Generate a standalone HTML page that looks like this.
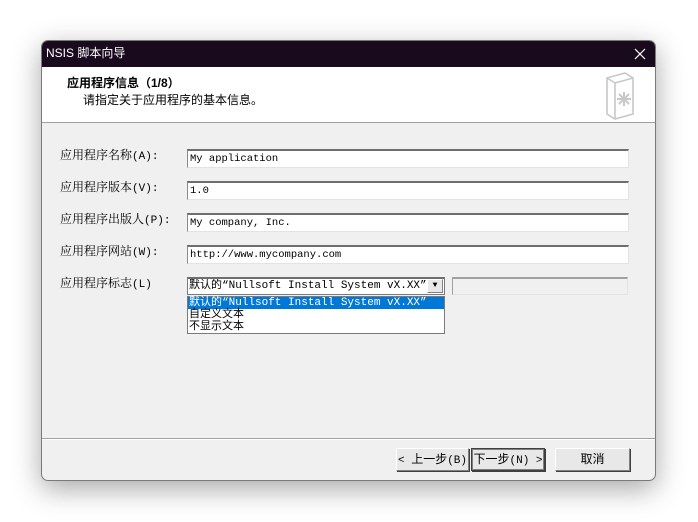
<!DOCTYPE html>
<html><head><meta charset="utf-8"><style>
*{box-sizing:border-box;margin:0;padding:0}
body{width:698px;height:522px;background:#fff;position:relative;overflow:hidden;font-family:"Liberation Sans","Noto Sans CJK SC",sans-serif;font-size:12px;color:#000}
.win{position:absolute;left:41px;top:40px;width:615px;height:441px;background:#f0f0f0;border:1px solid #7a7a7a;border-radius:7px;overflow:hidden;box-shadow:0 8px 28px rgba(0,0,0,.35)}
.title{position:absolute;left:0;top:0;width:100%;height:26px;background:#1a0a1e;color:#fff;font-size:12px;line-height:24px;padding-left:4px}
.head{position:absolute;left:0;top:26px;width:100%;height:56px;background:#fff;border-bottom:1px solid #a0a0a0}
.t1{position:absolute;left:25px;top:7px;font-weight:bold;font-size:12px}
.t2{position:absolute;left:41px;top:24px;font-size:12px}
.lbl{position:absolute;left:18px;font-size:12px;font-family:"Liberation Serif","Noto Serif CJK SC",serif}
.lbl span{font-family:"Liberation Mono",monospace;font-size:11px}
.ed{position:absolute;left:145px;width:442px;height:19px;background:#fff;border-top:2px solid #6e6e6e;border-left:1px solid #8a8a8a;border-right:1px solid #e3e3e3;border-bottom:1px solid #e3e3e3;font-family:"Liberation Mono","Noto Sans CJK SC",monospace;font-size:10.5px;line-height:16px;padding-left:2px}
.btn{position:absolute;top:407px;height:23px;background:#e8e8e8;border:1px solid #808080;border-top-color:#fff;border-left-color:#fff;box-shadow:1px 1px 0 #404040;font-size:12px;line-height:20px;text-align:center}
.ls{font-family:"Liberation Mono","Noto Sans CJK SC",monospace;font-size:11px}
</style></head><body>
<div class="win">
 <div class="title">NSIS 脚本向导
  <svg style="position:absolute;right:9px;top:7px" width="12" height="12" viewBox="0 0 12 12" stroke="#fff" stroke-width="1.2"><path d="M1 1 L11 11 M11 1 L1 11"/></svg></div>
 <div class="head">
  <div class="t1">应用程序信息（1/8）</div>
  <div class="t2">请指定关于应用程序的基本信息。</div>
  <svg style="position:absolute;left:561px;top:3px" width="36" height="50" viewBox="0 0 36 50" fill="none" stroke="#c8c8c8" stroke-width="1.6">
   <path d="M4 8 L22 3 L30 8 L30 44 L12 49 L4 44 Z"/><path d="M12 13 L30 8 M12 13 L12 49 M4 8 L12 13"/>
   <path d="M21 22 v14 M14 29 h14 M16 24 l10 10 M26 24 l-10 10" stroke-width="2"/>
  </svg>
 </div>
 <div class="lbl" style="top:105px">应用程序名称<span>(A):</span></div>
 <div class="lbl" style="top:137px">应用程序版本<span>(V):</span></div>
 <div class="lbl" style="top:169px">应用程序出版人<span>(P):</span></div>
 <div class="lbl" style="top:201px">应用程序网站<span>(W):</span></div>
 <div class="lbl" style="top:233px">应用程序标志<span>(L)</span></div>
 <div class="ed" style="top:108px">My application</div>
 <div class="ed" style="top:140px">1.0</div>
 <div class="ed" style="top:172px">My company, Inc.</div>
 <div class="ed" style="top:204px">http://www.mycompany.com</div>
 <div style="position:absolute;left:145px;top:236px;width:258px;height:18px;background:#fff;border:1px solid #7a7a7a;border-top:2px solid #6e6e6e;font-family:'Liberation Mono','Noto Sans CJK SC',monospace;font-size:11px;line-height:14px;padding-left:1px;white-space:nowrap;overflow:hidden">默认的“Nullsoft Install System vX.XX”
  <div style="position:absolute;right:1px;top:0;width:16px;height:14px;background:#e8e8e8;border:1px solid #fff;border-right-color:#808080;border-bottom-color:#808080;font-size:8px;line-height:12px;text-align:center">▼</div></div>
 <div style="position:absolute;left:410px;top:236px;width:176px;height:18px;background:#f0f0f0;border-top:2px solid #a0a0a0;border-left:1px solid #a0a0a0;border-right:1px solid #e3e3e3;border-bottom:1px solid #e3e3e3"></div>
 <div style="position:absolute;left:145px;top:255px;width:258px;height:38px;background:#fff;border:1px solid #7a7a7a;font-family:'Liberation Mono','Noto Sans CJK SC',monospace;font-size:11px;line-height:12px;white-space:nowrap">
  <div style="background:#0078d7;color:#fff;padding-left:1px">默认的“Nullsoft Install System vX.XX”</div>
  <div style="padding-left:1px">自定义文本</div>
  <div style="padding-left:1px">不显示文本</div>
 </div>
 <div style="position:absolute;left:0;top:397px;width:100%;height:1px;background:#a0a0a0"></div>
 <div style="position:absolute;left:0;top:398px;width:100%;height:1px;background:#fff"></div>
 <div class="btn" style="left:354px;width:73px"><span class="ls">&lt; </span>上一步<span class="ls">(B)</span></div>
 <div class="btn" style="left:429px;width:74px;border:1px solid #404040;outline:1px solid #808080;outline-offset:-2px"><span>下一步</span><span class="ls">(N) &gt;</span></div>
 <div class="btn" style="left:513px;width:75px">取消</div>
</div>
</body></html>
